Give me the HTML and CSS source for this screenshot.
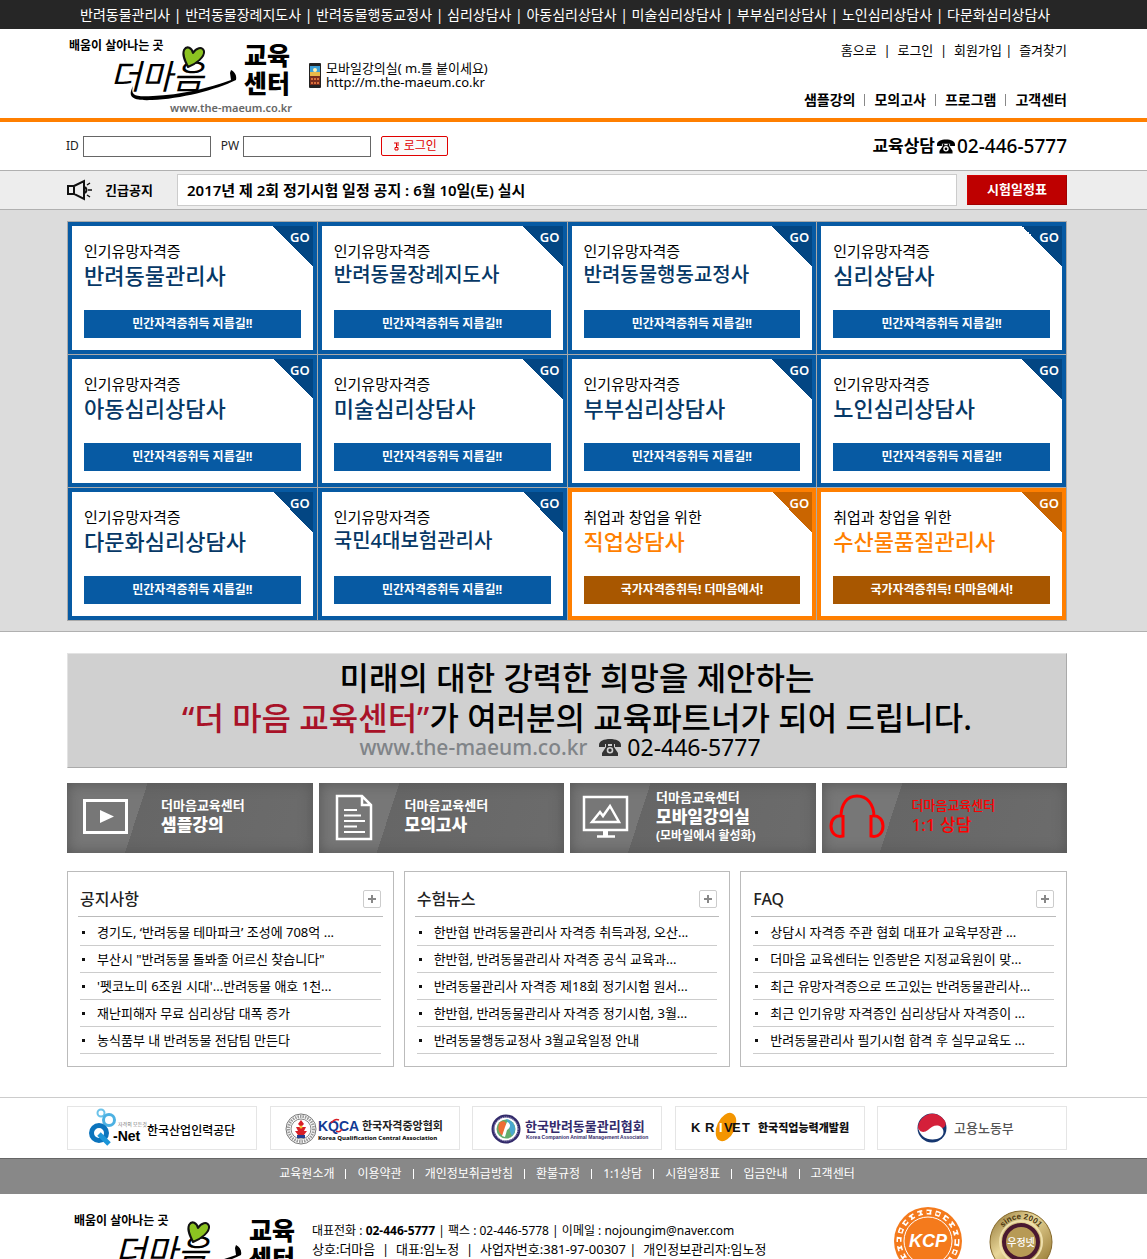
FILE: index.html
```html
<!DOCTYPE html>
<html lang="ko">
<head>
<meta charset="utf-8">
<meta name="viewport" content="width=device-width, initial-scale=1">
<title>더마음 교육센터</title>
<link rel="stylesheet" href="styles.css">
</head>
<body>
<svg class="defs" width="0" height="0" aria-hidden="true">
  <symbol id="phone" viewBox="0 0 22 17">
    <path d="M0 6C0 2 5 0 11 0s11 2 11 6v2h-6V5H6v3H0z"/>
    <path fill-rule="evenodd" d="M7 5h2v2h4V5h2v3l4 6v3H3v-3l4-6zM11 8a3.300 3.300 0 1 0 0 6.600 3.300 3.300 0 0 0 0-6.600zm0 1.600a1.700 1.700 0 1 1 0 3.400 1.700 1.700 0 0 1 0-3.400z"/>
  </symbol>
  <symbol id="logo" viewBox="0 0 228 80">
    <text x="2" y="14" font-size="12" font-weight="700">배움이 살아나는 곳</text>
    <text x="43" y="53" font-size="34" font-style="italic">더마음</text>
    <path d="M66 50c-3 10 3 11 20 10 28-1 56-8 78-16l-1-7 1-3c4 2 6 6 5 10-20 10-56 19-84 20-22 1-24-4-19-14z"/>
    <path d="M121 31c-3-6-6-12-4-17 3-5 8-2 9 3 3-5 9-7 11-2 1 6-8 13-16 16z" fill="#8cc321" stroke="#111" stroke-width="2" stroke-linejoin="round"/>
    <text x="177" y="29" font-size="25" font-weight="900">교육</text>
    <text x="177" y="57" font-size="25" font-weight="900">센터</text>
    <text x="103" y="76" font-size="11" font-weight="600" fill="#666">www.the-maeum.co.kr</text>
  </symbol>
</svg>

<nav class="topbar" aria-label="자격증 과정">
  <div class="inner topbar-links">
    <a href="#">반려동물관리사</a> | <a href="#">반려동물장례지도사</a> | <a href="#">반려동물행동교정사</a> | <a href="#">심리상담사</a> | <a href="#">아동심리상담사</a> | <a href="#">미술심리상담사</a> | <a href="#">부부심리상담사</a> | <a href="#">노인심리상담사</a> | <a href="#">다문화심리상담사</a>
  </div>
</nav>

<header class="header">
  <div class="inner header-row">
    <a class="logo" href="#" aria-label="더마음 교육센터"><svg class="logo-art" width="228" height="80"><use href="#logo"/></svg></a>
    <div class="mobile">
      <svg width="12" height="25" viewBox="0 0 12 25" aria-hidden="true">
        <rect width="12" height="25" rx="1" fill="#222"/>
        <rect x="1" y="3" width="10" height="9" fill="#3d9fd6"/>
        <path d="M1 9h10v4H1z" fill="#e9b949"/><circle cx="6" cy="7" r="2" fill="#fff3b0"/>
        <path d="M1 13h10v9H1z" fill="#7a2d1d"/>
        <path d="M2 15h2v2H2zm3 0h2v2H5zm3 0h2v2H8zM2 19h2v2H2zm3 0h2v2H5zm3 0h2v2H8z" fill="#d8703c"/>
      </svg>
      <p>모바일강의실( m.를 붙이세요)<br>http://m.the-maeum.co.kr</p>
    </div>
    <div class="header-nav">
      <nav class="util" aria-label="회원 메뉴"><a href="#">홈으로</a> &nbsp;|&nbsp; <a href="#">로그인</a> &nbsp;|&nbsp; <a href="#">회원가입</a> |&nbsp; <a href="#">즐겨찾기</a></nav>
      <nav class="menu" aria-label="주 메뉴"><a href="#">샘플강의</a><a href="#">모의고사</a><a href="#">프로그램</a><a href="#">고객센터</a></nav>
    </div>
  </div>
</header>

<section class="login">
  <div class="inner login-row">
    <form class="login-form">
      <label for="uid">ID</label><input id="uid" type="text">
      <label class="pw" for="upw">PW</label><input id="upw" type="password">
      <button type="button"><svg width="7" height="9" viewBox="0 0 7 9" aria-hidden="true"><path d="M1 1h5M3.500 1v4M3.500 3H6M2 5.500h3v2.500H2z" fill="none" stroke="#e00000"/></svg>로그인</button>
    </form>
    <p class="call">교육상담<svg width="18" height="15" aria-hidden="true"><use href="#phone"/></svg><span class="call-no">02-446-5777</span></p>
  </div>
</section>

<section class="notice">
  <div class="inner notice-row">
    <svg width="26" height="22" viewBox="0 0 26 22" fill="none" stroke="#111" stroke-width="2" aria-hidden="true">
      <path d="M1 7h6v8H1zM7 7l10-5v18L7 15zM18 8q3 3 0 6"/><path d="M20 6l3-2M21 11h4M20 16l3 2" stroke-width="1.500"/>
    </svg>
    <h2>긴급공지</h2>
    <a class="notice-text" href="#">2017년 제 2회 정기시험 일정 공지 : 6월 10일(토) 실시</a>
    <a class="notice-btn" href="#">시험일정표</a>
  </div>
</section>

<section class="courses">
  <div class="inner course-grid">
    <a class="card" href="#"><span class="go">GO</span><span class="sub">인기유망자격증</span><strong>반려동물관리사</strong><span class="bar">민간자격증취득 지름길!!</span></a>
    <a class="card" href="#"><span class="go">GO</span><span class="sub">인기유망자격증</span><strong class="long">반려동물장례지도사</strong><span class="bar">민간자격증취득 지름길!!</span></a>
    <a class="card" href="#"><span class="go">GO</span><span class="sub">인기유망자격증</span><strong class="long">반려동물행동교정사</strong><span class="bar">민간자격증취득 지름길!!</span></a>
    <a class="card" href="#"><span class="go">GO</span><span class="sub">인기유망자격증</span><strong>심리상담사</strong><span class="bar">민간자격증취득 지름길!!</span></a>
    <a class="card" href="#"><span class="go">GO</span><span class="sub">인기유망자격증</span><strong>아동심리상담사</strong><span class="bar">민간자격증취득 지름길!!</span></a>
    <a class="card" href="#"><span class="go">GO</span><span class="sub">인기유망자격증</span><strong>미술심리상담사</strong><span class="bar">민간자격증취득 지름길!!</span></a>
    <a class="card" href="#"><span class="go">GO</span><span class="sub">인기유망자격증</span><strong>부부심리상담사</strong><span class="bar">민간자격증취득 지름길!!</span></a>
    <a class="card" href="#"><span class="go">GO</span><span class="sub">인기유망자격증</span><strong>노인심리상담사</strong><span class="bar">민간자격증취득 지름길!!</span></a>
    <a class="card" href="#"><span class="go">GO</span><span class="sub">인기유망자격증</span><strong>다문화심리상담사</strong><span class="bar">민간자격증취득 지름길!!</span></a>
    <a class="card" href="#"><span class="go">GO</span><span class="sub">인기유망자격증</span><strong class="long">국민4대보험관리사</strong><span class="bar">민간자격증취득 지름길!!</span></a>
    <a class="card state" href="#"><span class="go">GO</span><span class="sub">취업과 창업을 위한</span><strong>직업상담사</strong><span class="bar">국가자격증취득! 더마음에서!</span></a>
    <a class="card state" href="#"><span class="go">GO</span><span class="sub">취업과 창업을 위한</span><strong>수산물품질관리사</strong><span class="bar">국가자격증취득! 더마음에서!</span></a>
  </div>
</section>

<main class="main">
  <div class="inner">
    <section class="banner">
      <p class="slogan">미래의 대한 강력한 희망을 제안하는<br><em>“더 마음 교육센터”</em>가 여러분의 교육파트너가 되어 드립니다.</p>
      <p class="contact"><span class="site">www.the-maeum.co.kr</span><svg width="22" height="17" aria-hidden="true"><use href="#phone"/></svg><span>02-446-5777</span></p>
    </section>

    <nav class="quick" aria-label="바로가기">
      <a class="wide" href="#">
        <svg width="58" height="50" viewBox="0 0 58 50" fill="none" stroke="#fff" aria-hidden="true"><rect x="9.500" y="7.500" width="42" height="32" stroke-width="3"/><path d="M25 17l14 6.500L25 30z" fill="#fff" stroke="none"/></svg>
        <span class="quick-text">더마음교육센터<b>샘플강의</b></span>
      </a>
      <a href="#">
        <svg width="58" height="50" viewBox="0 0 58 50" fill="none" stroke="#fff" aria-hidden="true"><path d="M10 3h25l9 9v34H10zM35 3v9h9" stroke-width="2.500"/><path d="M17 17h13M17 22.500h17M17 28h21M17 33.500h13M17 39h21" stroke-width="2"/></svg>
        <span class="quick-text">더마음교육센터<b>모의고사</b></span>
      </a>
      <a href="#">
        <svg width="58" height="50" viewBox="0 0 58 50" fill="none" stroke="#fff" aria-hidden="true"><rect x="6" y="4" width="43" height="33" stroke-width="2.500"/><path d="M14 29l8-10 3 4 7-10 9 16z" stroke-width="2.500"/><path d="M27.500 38v5" stroke-width="5"/><path d="M19 43.500h18" stroke-width="2.500"/></svg>
        <span class="quick-text">더마음교육센터<b>모바일강의실</b><small>(모바일에서 활성화)</small></span>
      </a>
      <a class="hot" href="#">
        <svg width="58" height="50" viewBox="0 0 58 50" fill="none" stroke="#f00" stroke-width="3" aria-hidden="true"><path d="M11 24c0-13 6-21 16-21s17 8 17 21M13 22v21C5 45 1 39 1 33s4-11 11-10M41 22v21c8 2 12-4 12-10s-4-11-11-10" stroke-linejoin="miter"/></svg>
        <span class="quick-text">더마음교육센터<b>1:1 상담</b></span>
      </a>
    </nav>

    <div class="boards">
      <section class="board">
        <div class="board-head"><h2>공지사항</h2><a class="more" href="#" aria-label="공지사항 더보기"></a></div>
        <ul>
          <li><a href="#">경기도, ‘반려동물 테마파크’ 조성에 708억 ...</a></li>
          <li><a href="#">부산시 "반려동물 돌봐줄 어르신 찾습니다"</a></li>
          <li><a href="#">'펫코노미 6조원 시대'...반려동물 애호 1천...</a></li>
          <li><a href="#">재난피해자 무료 심리상담 대폭 증가</a></li>
          <li><a href="#">농식품부 내 반려동물 전담팀 만든다</a></li>
        </ul>
      </section>
      <section class="board">
        <div class="board-head"><h2>수험뉴스</h2><a class="more" href="#" aria-label="수험뉴스 더보기"></a></div>
        <ul>
          <li><a href="#">한반협 반려동물관리사 자격증 취득과정, 오산...</a></li>
          <li><a href="#">한반협, 반려동물관리사 자격증 공식 교육과...</a></li>
          <li><a href="#">반려동물관리사 자격증 제18회 정기시험 원서...</a></li>
          <li><a href="#">한반협, 반려동물관리사 자격증 정기시험, 3월...</a></li>
          <li><a href="#">반려동물행동교정사 3월교육일정 안내</a></li>
        </ul>
      </section>
      <section class="board">
        <div class="board-head"><h2>FAQ</h2><a class="more" href="#" aria-label="FAQ 더보기"></a></div>
        <ul>
          <li><a href="#">상담시 자격증 주관 협회 대표가 교육부장관 ...</a></li>
          <li><a href="#">더마음 교육센터는 인증받은 지정교육원이 맞...</a></li>
          <li><a href="#">최근 유망자격증으로 뜨고있는 반려동물관리사...</a></li>
          <li><a href="#">최근 인기유망 자격증인 심리상담사 자격증이 ...</a></li>
          <li><a href="#">반려동물관리사 필기시험 합격 후 실무교육도 ...</a></li>
        </ul>
      </section>
    </div>
  </div>
</main>

<section class="partners">
  <div class="inner partner-row">
    <a href="#"><svg width="188" height="42" viewBox="0 0 188 42">
      <circle cx="33" cy="6" r="3.500" fill="none" stroke="#6cc3ea" stroke-width="2"/><circle cx="41" cy="13" r="5.500" fill="none" stroke="#4db1e2" stroke-width="3"/>
      <circle cx="31" cy="26" r="7.500" fill="none" stroke="#0b74bd" stroke-width="5"/><path d="M31 27l10 10" stroke="#1b95d8" stroke-width="5"/>
      <text x="50" y="19" font-size="5" fill="#777">자격의 모든것</text>
      <text class="arial" x="45" y="34" font-size="14" font-weight="700">-Net</text>
      <text x="79" y="28" font-size="12" font-weight="500">한국산업인력공단</text></svg></a>
    <a href="#"><svg width="188" height="42" viewBox="0 0 188 42">
      <circle cx="30" cy="22" r="15" fill="#fff" stroke="#777"/><circle cx="30" cy="22" r="12.500" fill="none" stroke="#999" stroke-width="3" stroke-dasharray="1.500 1"/><circle cx="30" cy="22" r="10" fill="#fff" stroke="#888"/>
      <path d="M30 13l3 4-3 3-3-3zM25 20h10l-2 4h-6zM24 24h12l-3 4h-6z" fill="#d81f26"/><path d="M26 28h8v3h-8z" fill="#223c8f"/><circle cx="30" cy="20" r="1.500" fill="#f4c430"/>
      <text class="arial" x="47" y="24" font-size="14" font-weight="700" fill="#123a94">KQCA</text>
      <path d="M60 16q4-5 8-3M65 24q4 2 6-2" fill="none" stroke="#d81f26" stroke-width="1.500"/>
      <text x="91" y="23" font-size="11" font-weight="700" fill="#222">한국자격중앙협회</text>
      <text x="47" y="33" font-size="6" font-weight="800" fill="#111">Korea Qualification Central Association</text></svg></a>
    <a href="#"><svg width="188" height="42" viewBox="0 0 188 42">
      <circle cx="33" cy="22" r="13" fill="#fff" stroke="#332b6b" stroke-width="3"/><circle cx="33" cy="22" r="12" fill="none" stroke="#bbb6dd" stroke-width="1" stroke-dasharray="1 1"/>
      <circle cx="33" cy="22" r="9.500" fill="#63ad6c"/><path d="M33 12a10 10 0 0 1 6 17c-3-4-2-11-6-17z" fill="#4aa7cf"/><path d="M27 15c5-2 7 1 6 5l-3 9c-5-3-6-9-3-14z" fill="#ee6c35"/><path d="M34 15c5 2 3 6 0 8l-2 7-3-1 3-9z" fill="#fff"/>
      <text x="52" y="24" font-size="13" font-weight="700" fill="#332b6b">한국반려동물관리협회</text>
      <text class="arial" x="53" y="32" font-size="5" font-weight="700" fill="#332b6b">Korea Companion Animal Management Association</text></svg></a>
    <a href="#"><svg width="188" height="42" viewBox="0 0 188 42">
      <ellipse cx="50" cy="20" rx="9" ry="15" transform="rotate(25 50 20)" fill="#f39500"/>
      <g class="arial" font-size="13" font-weight="700" fill="#111"><text x="15" y="25">K</text><text x="29" y="25">R</text><text x="43" y="25" fill="#fff">I</text><text x="48" y="25">V</text><text x="56" y="25">E</text><text x="66" y="25">T</text></g>
      <text x="82" y="25" font-size="11" font-weight="900" fill="#111">한국직업능력개발원</text></svg></a>
    <a href="#"><svg width="188" height="42" viewBox="0 0 188 42">
      <circle cx="54" cy="21" r="14.500" fill="#15366f"/>
      <path d="M40 20a14.500 14.500 0 0 1 27-6c2 5-1 8-6 7-5-2-9 3-14 4-4 1-7-1-7-5z" fill="#d4203a"/>
      <path d="M40 19c1 7 6 7 10 4 4-4 9-6 13-3 5 4 2 11-4 12-9 2-18-2-19-13z" fill="#fff"/>
      <text x="76" y="26" font-size="13" font-weight="500" fill="#555">고용노동부</text></svg></a>
  </div>
</section>

<nav class="foot-nav" aria-label="하단 메뉴">
  <a href="#">교육원소개</a><a href="#">이용약관</a><a href="#">개인정보취급방침</a><a href="#">환불규정</a><a href="#">1:1상담</a><a href="#">시험일정표</a><a href="#">입금안내</a><a href="#">고객센터</a>
</nav>

<footer class="footer">
  <div class="inner footer-row">
    <svg class="foot-logo" width="228" height="80" role="img" aria-label="더마음 교육센터"><use href="#logo"/></svg>
    <div class="info">
      <p class="tel">대표전화 : <b>02-446-5777</b> | 팩스 : 02-446-5778 | 이메일 : nojoungim@naver.com</p>
      <p>상호:더마음 &nbsp;|&nbsp; 대표:임노정 &nbsp;|&nbsp; 사업자번호:381-97-00307 |&nbsp; 개인정보관리자:임노정</p>
    </div>
    <svg class="seals" width="160" height="72" viewBox="0 0 160 72">
      <circle cx="35" cy="35" r="34" fill="#f47a1c"/><circle cx="35" cy="35" r="29" fill="none" stroke="#fff" stroke-width="5" stroke-dasharray="5 4"/><circle cx="35" cy="35" r="29" fill="none" stroke="#f47a1c" stroke-width="2" stroke-dasharray="3 2"/><circle cx="35" cy="35" r="24" fill="#f47a1c" stroke="#fff"/>
      <text class="arial" x="35" y="41" font-size="18" font-weight="700" font-style="italic" text-anchor="middle" fill="#fff">KCP</text>
      <defs><linearGradient id="gold" x1="0" y1="0" x2="1" y2="1"><stop offset="0" stop-color="#8a6d2c"/><stop offset=".4" stop-color="#e9d79a"/><stop offset="1" stop-color="#8a6a22"/></linearGradient><path id="arc" d="M105 36a23 23 0 0 1 46 0"/></defs>
      <circle cx="128" cy="36" r="31" fill="url(#gold)" stroke="#85682a"/><circle cx="128" cy="36" r="21" fill="none" stroke="#efe0ad" stroke-width="2"/><circle cx="128" cy="36" r="17" fill="#b79a55" stroke="#4a1830" stroke-width="4"/>
      <text class="arial" font-size="8" font-weight="700" fill="#4a3510"><textPath href="#arc" startOffset="50%" text-anchor="middle">since 2001</textPath></text>
      <text x="128" y="40" font-size="10" font-weight="500" text-anchor="middle" fill="#fff">우정넷</text>
    </svg>
  </div>
</footer>
</body>
</html>
```
FILE: styles.css
```css
* { box-sizing: border-box; }
body {
  margin: 0;
  background: #fff;
  color: #000;
  font: 13px/18px "Noto Sans", "Noto Sans CJK KR", sans-serif;
}
p, h2, ul { margin: 0; padding: 0; }
a { color: inherit; text-decoration: none; }
svg { display: block; flex: none; overflow: visible; }
.defs { position: absolute; }
.arial { font-family: "Liberation Sans", sans-serif; }

.topbar, .header, .login, .notice, .courses, .main, .partners, .foot-nav, .footer { padding-right: 13px; }
.inner { max-width: 1000px; margin: 0 auto; }

.topbar { background: #262626; color: #fff; font-size: 14px; line-height: 29px; }
.topbar-links { padding-left: 13px; white-space: nowrap; }

.header { border-bottom: 4px solid #ff7f00; }
.header-row { display: flex; height: 89px; }
.logo { margin-top: 7px; }
.mobile { display: flex; gap: 5px; margin: 34px 0 0 14px; line-height: 14px; align-items: flex-start; }
.mobile p { white-space: nowrap; margin-top: -2px; }
.header-nav { margin-left: auto; text-align: right; white-space: nowrap; }
.util { margin-top: 12px; }
.menu { display: flex; justify-content: flex-end; margin-top: 32px; font-size: 14px; font-weight: 700; line-height: 18px; }
.menu a { display: flex; align-items: center; }
.menu a + a::before { content: ""; width: 1px; height: 12px; margin: 0 9px; background: #888; }

.login-row { display: flex; justify-content: space-between; align-items: center; height: 48px; }
.login-form { display: flex; align-items: center; gap: 4px; margin-left: -1px; font-size: 12px; color: #222; }
.login-form input { width: 128px; height: 21px; padding: 0 4px; border: 1px solid #666; background: #fff; }
.login-form .pw { margin-left: 6px; }
.login-form button {
  display: flex; align-items: center; justify-content: center; gap: 4px;
  width: 67px; height: 20px; margin-left: 6px; padding: 0;
  border: 1px solid #e00000; border-radius: 2px; background: #fafafa;
  color: #e00000; font: inherit; font-size: 12px; line-height: 18px;
}
.call { display: flex; align-items: center; gap: 2px; font-size: 17px; font-weight: 700; line-height: 24px; }
.call-no { font-size: 19px; font-weight: 500; }

.notice { border-top: 1px solid #b0b0b0; border-bottom: 1px solid #b0b0b0; background: #ededed; }
.notice-row { display: flex; align-items: center; height: 38px; }
.notice h2 { width: 84px; padding-left: 12px; font-size: 13px; font-weight: 600; line-height: 18px; }
.notice-text { flex: 1; height: 32px; padding-left: 9px; border: 1px solid #ccc; background: #fff; font-size: 15px; font-weight: 600; line-height: 30px; }
.notice-btn { width: 100px; height: 30px; margin-left: 10px; border: 1px solid #d40000; border-right-color: #a00000; border-bottom-color: #a00000; background: #be0000; color: #fff; font-weight: 700; line-height: 27px; text-align: center; }

.courses { padding-top: 11px; padding-bottom: 10px; border-bottom: 1px solid #b0b0b0; background: #dcdcdc; }
.course-grid { display: grid; grid-template-columns: repeat(4, 1fr); gap: 1px; padding: 1px; background: #aaa; }
.card { position: relative; display: flex; flex-direction: column; height: 132px; padding: 14px 12px 12px; border: 4px solid #075aa3; background: #fff; }
.sub { font-size: 15px; line-height: 22px; }
.card strong { color: #063866; font-size: 22px; font-weight: 500; line-height: 26px; }
.card .long { font-size: 20px; }
.bar { margin-top: auto; background: #075aa3; color: #fff; font-size: 12px; font-weight: 700; line-height: 28px; text-align: center; }
.go { position: absolute; top: 0; right: 0; width: 40px; height: 40px; padding: 2px 3px 0 0; background: linear-gradient(to top right, transparent 50%, #034683 50%); color: #fff; font-weight: 600; text-align: right; }
.state { border-color: #ff7f00; }
.state strong { color: #ff7f00; }
.state .bar { background: #a85700; }
.state .go { background: linear-gradient(to top right, transparent 50%, #ca6500 50%); }

.main { padding-top: 21px; padding-bottom: 30px; }
.banner { padding: 4px 0 11px 20px; border: 1px solid; border-color: #e3e3e3 #aaa #aaa #e3e3e3; background: #d0d0d0; text-align: center; }
.slogan { font-size: 32px; font-weight: 500; line-height: 40px; }
.slogan em { color: #a81228; font-style: normal; }
.contact { display: flex; justify-content: center; align-items: center; gap: 6px; padding-right: 34px; font-size: 23px; line-height: 18px; }
.contact svg { fill: #333; margin-left: 6px; }
.site { color: #808488; font-size: 21px; font-weight: 500; }

.quick { display: grid; grid-template-columns: repeat(4, 1fr); gap: 6px; margin-top: 15px; }
.quick a { display: flex; align-items: center; gap: 20px; height: 70px; padding: 0 0 4px 8px; background: linear-gradient(108deg, #777 30%, #666 30%, #6c6c6c); box-shadow: inset 0 0 14px #555; color: #fff; }
.quick .wide { gap: 28px; }
.quick svg { margin-top: 4px; }
.quick-text { display: flex; flex-direction: column; font-weight: 700; line-height: 17px; white-space: nowrap; }
.quick b { font-size: 17px; line-height: 22px; }
.quick small { font-size: 12px; line-height: 15px; }
.quick .hot { gap: 24px; color: #f00; }
.hot .quick-text, .hot b { font-weight: 500; }

.boards { display: grid; grid-template-columns: repeat(3, 1fr); gap: 10px; margin-top: 18px; }
.board { padding: 12px 10px; border: 1px solid #bbb; }
.board-head { display: flex; align-items: center; justify-content: space-between; height: 33px; padding: 0 2px 3px; border-bottom: 1px solid #bbb; }
.board h2 { font-size: 16px; font-weight: 500; line-height: 24px; color: #222; }
.more { width: 18px; height: 18px; border: 1px solid #ccc; border-radius: 2px; background: linear-gradient(#888, #888) center / 8px 2px no-repeat, linear-gradient(#888, #888) center / 2px 8px no-repeat, #fff; }
.board ul { list-style: none; padding: 2px 2px 0; }
.board li { display: flex; align-items: center; height: 27px; padding-left: 2px; border-bottom: 1px solid #ccc; white-space: nowrap; }
.board li::before { content: ""; width: 3px; height: 3px; margin-right: 12px; background: #111; }

.partners { padding-top: 8px; padding-bottom: 8px; border-top: 1px solid #ccc; }
.partner-row { display: flex; justify-content: space-between; }
.partner-row a { border: 1px solid #e5e5e5; }

.foot-nav { display: flex; justify-content: center; height: 36px; border-top: 1px solid #666; background: #888; color: #fff; font-size: 12px; line-height: 30px; }
.foot-nav a { display: flex; align-items: center; height: 30px; }
.foot-nav a + a::before { content: ""; width: 1px; height: 10px; margin: 0 11px; background: #fff; }

.footer { height: 65px; overflow: hidden; }
.footer-row { display: flex; padding-top: 12px; }
.foot-logo { margin: 5px 12px 0 5px; }
.info { padding-top: 16px; white-space: nowrap; }
.tel { font-size: 12px; }
.seals { margin: 0 14px 0 auto; }
```
